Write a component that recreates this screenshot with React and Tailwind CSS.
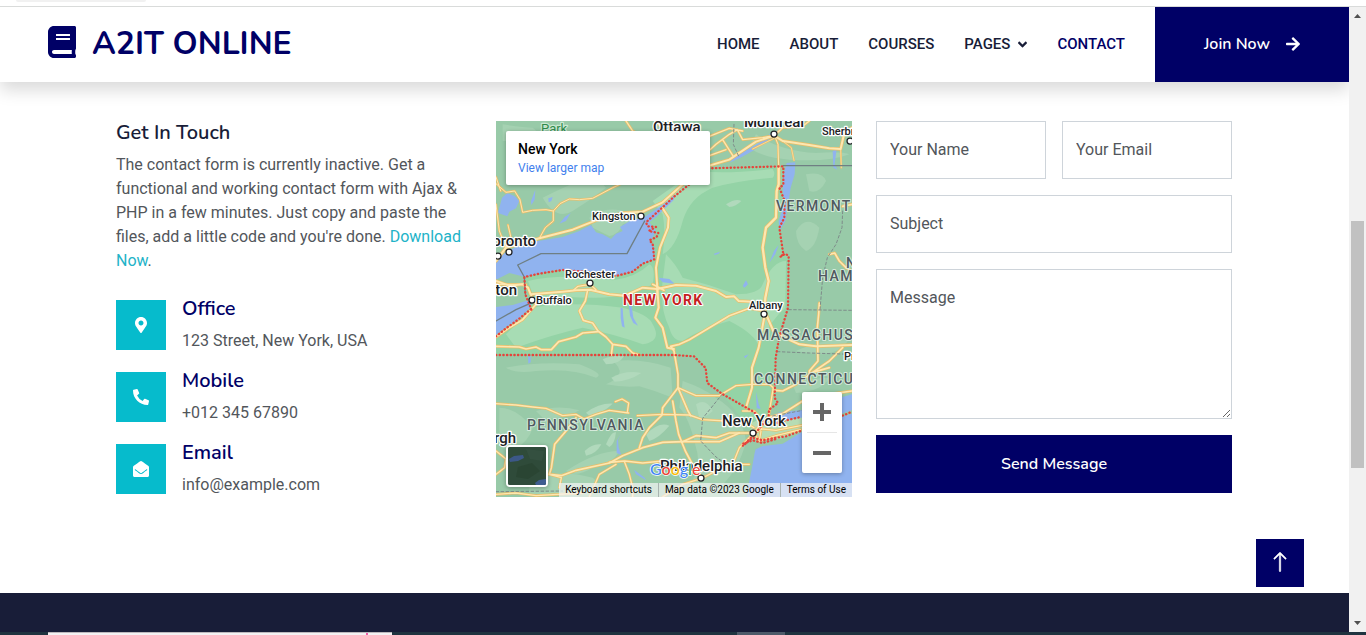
import React from "react";
import {
  FaBook,
  FaAngleDown,
  FaArrowRight,
  FaMapMarkerAlt,
  FaPhoneAlt,
  FaEnvelopeOpen,
} from "react-icons/fa";
import { BsArrowUp } from "react-icons/bs";

const NAV = [
  { label: "HOME" },
  { label: "ABOUT" },
  { label: "COURSES" },
  { label: "PAGES", menu: true },
  { label: "CONTACT", active: true },
];

const CONTACTS = [
  { title: "Office", text: "123 Street, New York, USA", Icon: FaMapMarkerAlt },
  { title: "Mobile", text: "+012 345 67890", Icon: FaPhoneAlt },
  { title: "Email", text: "info@example.com", Icon: FaEnvelopeOpen },
];

function Header() {
  return (
    <header className="relative z-10 flex h-[75px] shrink-0 items-stretch justify-between bg-white shadow-[0_8px_16px_rgba(0,0,0,0.15)]">
      <a href="#home" className="flex items-center gap-4 pl-12 pb-1.5 text-[#000066]">
        <FaBook className="h-8 w-7" />
        <span className="pt-1 font-['Nunito','Lato',sans-serif] text-[32px] leading-10 font-bold">
          A2IT ONLINE
        </span>
      </a>
      <div className="flex items-stretch">
        <nav className="flex items-center gap-[30px] pr-[30px] text-[15px] font-medium">
          {NAV.map(({ label, menu, active }) => (
            <a
              key={label}
              href={"#" + label.toLowerCase()}
              className={
                active
                  ? "flex items-center text-[#000066]"
                  : "flex items-center gap-2 text-[#181d38]"
              }
            >
              {label}
              {menu && <FaAngleDown className="h-[15px] w-[9px]" />}
            </a>
          ))}
        </nav>
        <a
          href="#join"
          className="flex w-[194px] items-center justify-center gap-4 bg-[#000066] pb-0.5 font-['Nunito','Lato',sans-serif] text-base font-semibold text-white"
        >
          Join Now
          <FaArrowRight className="h-4 w-[14px]" />
        </a>
      </div>
    </header>
  );
}

const WATER = [
  "M0 412L40 388 90 366 200 348 250 330 285 312 300 334 320 340 345 354 360 338 380 330 372 318 408 296 440 292 520 238 534 222 534 236 478 290 460 304 480 330 462 362 475 380 475 415 440 428 410 452 360 465 270 452 180 446 130 458 85 467 40 456 0 476Z",
  "M0 558L50 552 90 540 108 540 104 558 66 596 30 618 0 642Z",
  "M779 985L800 975 860 968 914 935 1000 898 1068 878V1128H752L756 1100 768 1040 776 995Z",
  "M822 888L850 874 914 868 970 848 1068 820V868L1000 890 940 906 880 904 822 916Z",
  "M872 126L898 124 896 160 884 200 878 240 868 300 850 330 848 300 862 256 860 170Z",
  "M700 125L720 105 790 65 822 38 850 26 826 50 770 90 730 112Z",
  "M18 230L34 216 56 226 70 240 60 262 40 272 34 286 6 276Z",
  "M105 240L118 206 116 236 106 252Z",
  "M157 232L170 228 166 240 158 244Z",
  "M190 308L206 288 224 276 210 300Z",
  "M1010 90L1022 84 1016 130 1024 146 1012 140Z",
  "M820 425L834 390 848 372 838 400Z",
  "M740 495L750 478 756 490 746 500Z",
  "M374 560L380 562 382 590 386 620 378 616 374 590Z",
  "M398 544L406 550 412 590 426 614 412 606 402 584Z",
  "M780 812L788 850 794 864 782 862Z",
  "M488 470L520 474 536 488 500 484Z",
  "M375 938L366 956 368 980 376 1002 362 996 362 960Z",
  "M96 706H104V724L97 728Z",
  "M414 1046L446 1070 450 1078 420 1060Z",
  "M654 398L672 392 668 398 656 402Z",
  "M744 706L758 700 748 712Z",
];

const LIGHT_LAND = [
  "M250 180Q300 160 330 200Q280 240 230 270T140 230Q200 200 250 180Z",
  "M20 10Q80 20 110 20Q140 40 90 50T20 60Z",
  "M280 290Q330 250 400 276Q440 290 380 310Q370 340 340 345Q310 330 290 320Z",
  "M780 40Q850 90 960 96Q1040 90 1060 100Q1000 124 880 116Q800 110 760 80Z",
  "M30 740Q130 720 250 730Q330 760 300 770Q230 740 120 750Q60 760 30 740Z",
  "M350 720Q440 710 524 740L530 830Q480 810 430 796Q380 800 330 790Q400 760 350 720Z",
  "M120 870Q190 850 250 868Q200 900 140 890Z",
  "M210 1050Q300 990 370 990Q350 1030 290 1040Q240 1070 210 1050Z",
  "M560 780Q620 800 660 830Q740 880 750 960Q730 1050 660 1110H570Q620 1040 600 980Q580 890 550 860Z",
  "M900 690Q960 660 1060 650Q1040 700 960 700Z",
  "M900 330Q930 280 970 320Q960 380 930 390Q900 370 900 330Z",
  "M930 160Q980 150 990 180Q970 220 940 210Z",
  "M10 860Q60 860 110 920Q100 960 50 990Q10 970 10 930Z",
  "M100 1080Q180 1040 290 1070Q330 1100 280 1120H100Z",
  "M890 790Q940 770 1000 770Q980 810 900 816Z",
];

const NY_LIGHT = [
  "M96 480Q200 456 350 478Q420 470 460 430Q480 440 470 490Q400 530 300 530T110 520Z",
  "M110 560Q220 540 380 560Q460 580 470 610Q500 660 440 670Q360 640 260 620Q170 640 60 680L30 640Z",
  "M510 400Q540 430 560 470Q640 490 720 520Q790 520 800 490Q830 420 870 420L868 560Q820 600 790 680Q780 640 700 600Q620 620 560 660Q530 660 520 620Q490 560 500 480Z",
  "M470 240Q540 190 600 150Q690 160 830 144Q840 160 830 170Q720 180 650 200Q580 230 560 300Q540 380 500 400Q510 330 500 280Z",
];

const PATCHES = [
  "M320 715Q350 700 384 706Q370 730 330 730Z",
  "M346 770Q390 745 436 756Q400 780 356 782Z",
  "M270 875Q310 846 350 848Q320 878 280 884Z",
  "M266 990Q290 966 316 970Q300 1000 270 1004Z",
  "M330 970Q346 930 360 934Q356 970 340 978Z",
  "M450 940Q490 900 520 914Q490 950 460 960Z",
  "M600 850Q630 830 650 870Q630 890 610 890Z",
  "M60 110Q130 90 190 110Q150 130 90 130Z",
  "M690 250Q720 230 736 240Q720 256 700 258Z",
];

const NY_STATE =
  "M100 540L85 468 130 458 200 447 270 452 360 465 410 452 440 428 475 415 470 368 487 342 465 322 450 304 490 268 534 227 640 142 862 136 862 192 850 200 866 240 865 290 850 320 862 400 878 405 876 560 849 651 839 711 836 831 846 846 819 866 774 941 679 819 634 786 629 741 594 706 534 702H0V645L60 605Z";

const RED_BORDER = [
  "M106 566L88 520 85 468 130 458 200 447 270 452 360 465 410 452 440 428 475 415 470 368 460 358 482 348 487 336 458 330 480 318 455 316 450 304 490 268 534 227 640 142 862 136 862 192 850 200 866 240 865 290 850 320 862 400 852 408 868 398 878 405 876 560 849 651 839 711 836 831 846 846 819 866 818 890 774 941 740 975 770 950 800 958 830 952 870 946 914 930",
  "M0 702H534L594 706 629 741 634 786 679 819 774 873 800 900",
  "M0 646L30 622 66 596 110 560",
  "M822 912L870 898 914 888",
  "M1040 884L1068 872",
  "M742 968L770 958 800 966 840 954",
];

const GREY_LINES = [
  "M88 520L85 468 65 432 135 398H393L446 300",
  "M862 134H1068",
  "M0 600L60 566 108 545",
];

const DASHED = [
  "M1040 270L1038 320 1020 370 994 410 980 470 972 566",
  "M878 566L1068 568",
  "M844 692L940 696 1068 700",
  "M679 819L620 892 614 960 660 1008 720 1050",
  "M714 10L712 70 730 110",
  "M0 1112L200 1110",
  "M830 885L920 868",
];

const ROADS = [
  { d: "M0 420L30 380 60 372 130 352 230 326 300 298 380 276 440 272 500 244 560 190 640 134 700 116 780 62 834 44", w: 6 },
  { d: "M30 380L10 330 0 250M0 188L30 214 56 210 72 236 80 274 110 268 150 266 172 270 192 248 220 234 250 236 290 232 350 200 372 190", w: 3 },
  { d: "M36 312L44 346 30 380M130 352L148 320 172 300 172 270M0 168L14 210", w: 3 },
  { d: "M0 480L40 494 80 490 96 500 104 520 200 512 240 508 282 506 340 520 386 524 440 500 484 504 540 492 600 494 660 510 690 528 714 526 728 540 768 542", w: 6 },
  { d: "M234 506L246 496 282 490 300 506M0 490L90 490", w: 4 },
  { d: "M484 504L480 440 492 380 516 320 518 290 500 262", w: 6 },
  { d: "M484 504L488 560 478 590 500 620 514 680 534 684", w: 6 },
  { d: "M104 520L120 550 80 596 40 620 0 648", w: 5 },
  { d: "M274 512L268 540 250 570 262 598 290 606 306 630 330 648 350 670 390 676 410 696 430 702M350 670L346 702", w: 5 },
  { d: "M0 676L70 678 90 684 120 678 136 686 166 686 188 662 240 648 260 636 306 632", w: 5 },
  { d: "M848 138L848 190 842 210 840 290 810 320 800 380 808 440 818 480 808 530 806 570", w: 7 },
  { d: "M834 44L860 60 940 72 1000 82 1034 84 1044 40 1068 20", w: 6 },
  { d: "M848 138L846 70 838 50", w: 3 },
  { d: "M642 86L660 70 700 40 724 26 740 56 800 50 834 44M640 46L700 22 740 30M680 56L712 106M640 104L690 86M834 44L860 20 920 16 940 0", w: 4 },
  { d: "M1034 84L1036 140M860 60L886 80 894 118M834 52L770 84", w: 2 },
  { d: "M1000 400L1016 396 1030 420 1050 440 1068 450M1040 256L1068 250M970 546L968 580 964 620 966 720 940 750 944 790", w: 5 },
  { d: "M806 570L832 630 870 652 910 670 960 676 1068 672M806 582L788 680 768 740 768 800 750 860", w: 6 },
  { d: "M806 570L760 562 700 584 640 620 580 656 550 670 524 676 534 690 546 760 546 800 576 870 584 884", w: 5 },
  { d: "M546 800L600 824 670 824 720 794 770 790 820 790 832 800 822 860 816 900", w: 4 },
  { d: "M836 808L860 810 900 790 950 754 1000 720 1040 680M950 754L1000 740M816 890L860 878 920 840 1000 820 1068 810", w: 5 },
  { d: "M546 800L500 860 498 882 460 920 440 950 430 980M530 840L540 900 548 940 568 990 600 1050 617 1072", w: 5 },
  { d: "M424 884L500 880 580 882 620 896 690 900 740 900 774 920", w: 4 },
  { d: "M0 848L60 852 110 858 150 862 200 884 240 880 264 894 300 880 340 868 398 876M358 842L378 834 398 846 394 874", w: 4 },
  { d: "M240 890L210 930 176 970 166 1040 160 1060 196 1064 240 1048 340 1026 380 1004 440 980 500 964 560 962 600 944 660 950 700 936 774 936", w: 5 },
  { d: "M340 1024L386 1020 440 1026 500 1020M560 962L600 962 670 962 730 936", w: 5 },
  { d: "M386 1024L400 1060 410 1100 410 1128M360 1030L310 1060 280 1128M160 1060L196 1070 190 1100M0 1120L60 1116 120 1124 260 1116", w: 4 },
  { d: "M774 936L730 980 710 1030 660 1050 617 1072 560 1090 500 1128M710 1030H760", w: 4 },
  { d: "M774 936L800 924 840 928 914 914 1000 900M774 936L790 960 840 944 914 926M774 936L800 900 774 870 740 870M790 960L800 900", w: 4 },
  { d: "M0 990L30 1014 26 1040 0 1060M390 0L410 30 450 50M480 0L500 24 530 30", w: 4 },
  { d: "M470 490L504 508M484 486V520", w: 5 },
];

const CITIES = [
  [278, 13],
  [354, 20],
  [145, 95],
  [13, 131],
  [2, 135],
  [94, 162],
  [36, 179],
  [268, 193],
  [257, 312],
  [205, 357],
];

function MapDrawing() {
  return (
    <svg
      viewBox="0 0 356 376"
      preserveAspectRatio="xMidYMid slice"
      className="absolute inset-0 h-full w-full font-['Roboto',sans-serif]"
      role="img"
      aria-label="Map of New York"
    >
      <rect width="356" height="376" fill="#98caa8" />
      <g transform="scale(0.33333)" strokeLinejoin="round" strokeLinecap="round">
        {LIGHT_LAND.map((d) => (
          <path key={d} d={d} fill="#a5d2b2" />
        ))}
        <path d={NY_STATE} fill="#94d3a6" />
        {NY_LIGHT.map((d) => (
          <path key={d} d={d} fill="#a7dcb4" />
        ))}
        {PATCHES.map((d) => (
          <path key={d} d={d} fill="#b1d9bc" />
        ))}
        {WATER.map((d) => (
          <path key={d} d={d} fill="#90b3ef" />
        ))}
        <path
          d="M768 905L790 895 830 905 914 890 1000 888 914 932 850 954 790 958 760 950Z"
          fill="#b6dcb4"
        />
        <g fill="none" stroke="#e9bd68">
          {ROADS.map(({ d, w }) => (
            <path key={d} d={d} strokeWidth={w + 4} />
          ))}
        </g>
        <g fill="none" stroke="#fde7b0">
          {ROADS.map(({ d, w }) => (
            <path key={d} d={d} strokeWidth={w} />
          ))}
        </g>
        <g fill="none" stroke="#6f7f83" strokeWidth="4">
          {GREY_LINES.map((d) => (
            <path key={d} d={d} />
          ))}
        </g>
        <g fill="none" stroke="#7d8c8a" strokeWidth="3" strokeDasharray="8 7">
          {DASHED.map((d) => (
            <path key={d} d={d} />
          ))}
        </g>
        <g fill="none" stroke="#e5443b" strokeWidth="7" strokeDasharray="1 10">
          {RED_BORDER.map((d) => (
            <path key={d} d={d} />
          ))}
        </g>
      </g>

      <g fill="#fff" stroke="#202124" strokeWidth="1.25">
        {CITIES.map(([x, y]) => (
          <circle key={x} cx={x} cy={y} r="3" />
        ))}
      </g>

      <g
        fill="#202124"
        stroke="#fff"
        strokeWidth="2.5"
        strokeLinejoin="round"
        paintOrder="stroke"
        fontWeight="500"
        fontSize="11"
      >
        <text x="45" y="12" fontSize="13" fontWeight="400" fill="#2f8a4c" stroke="#c9e8d1">Park</text>
        <text x="326" y="14">Sherbrooke</text>
        <text x="96" y="99">Kingston</text>
        <text x="69" y="157">Rochester</text>
        <text x="40" y="183">Buffalo</text>
        <text x="253" y="188">Albany</text>
        <text x="348" y="239">Providence</text>
        <g fontSize="15">
          <text x="157" y="11">Ottawa</text>
          <text x="248" y="6">Montreal</text>
          <text x="40" y="125" textAnchor="end">Toronto</text>
          <text x="21" y="174" textAnchor="end">Hamilton</text>
          <text x="226" y="305">New York</text>
          <text x="20" y="322" textAnchor="end">Pittsburgh</text>
          <text x="164" y="350">Philadelphia</text>
        </g>
      </g>
      <g
        className="tracking-widest"
        fill="#50595f"
        stroke="#d5eadb"
        strokeWidth="2"
        strokeLinejoin="round"
        paintOrder="stroke"
        fontWeight="500"
        fontSize="14"
      >
        <text x="280" y="90">VERMONT</text>
        <text x="350" y="147">NEW</text>
        <text x="322" y="160">HAMPSHIRE</text>
        <text x="261" y="219">MASSACHUSETTS</text>
        <text x="258" y="263">CONNECTICUT</text>
        <text x="31" y="309">PENNSYLVANIA</text>
        <text x="127" y="184" fontWeight="700" fill="#c5221f" stroke="#fff">NEW YORK</text>
      </g>
      <text
        x="154"
        y="354"
        fontSize="16"
        fontWeight="500"
        stroke="#fff"
        strokeWidth="1.5"
        paintOrder="stroke"
        className="font-['Lato',sans-serif]"
      >
        <tspan fill="#4285f4">G</tspan>
        <tspan fill="#ea4335">o</tspan>
        <tspan fill="#fbbc04">o</tspan>
        <tspan fill="#4285f4">g</tspan>
        <tspan fill="#34a853">l</tspan>
        <tspan fill="#ea4335">e</tspan>
      </text>
    </svg>
  );
}

function MapPanel() {
  return (
    <section aria-label="Map" className="relative overflow-hidden bg-[#98caa8]">
      <MapDrawing />
      <div className="absolute top-2.5 left-2.5 w-[204px] rounded-xs bg-white px-3 py-2 shadow-[0_1px_4px_rgba(0,0,0,0.3)]">
        <p className="text-sm leading-5 font-medium text-black">New York</p>
        <a href="#map" className="block text-xs leading-[18px] text-[#427fed]">
          View larger map
        </a>
      </div>
      <button
        type="button"
        aria-label="Show satellite imagery"
        className="absolute bottom-2.5 left-2.5 h-[42px] w-[42px] overflow-hidden rounded-sm border-2 border-white bg-[#2c4636] shadow-[0_1px_4px_rgba(0,0,0,0.3)]"
      >
        <svg viewBox="0 0 38 38" className="h-full w-full">
          <rect width="38" height="38" fill="#2f4b3a" />
          <path d="M10 20L24 16 32 24 20 32 8 30Z" fill="#2a4533" />
          <path d="M18 2L36 4 34 14 22 12Z" fill="#345040" />
          <path d="M1 12L6 9 15 8 16 11 10 14 2 15Z" fill="#3c5888" />
          <path d="M27 36L31 33 38 32V38H28Z" fill="#3f5d90" />
        </svg>
      </button>
      <div className="absolute right-2.5 bottom-6 flex w-10 flex-col items-center rounded-xs bg-white shadow-[0_1px_4px_rgba(0,0,0,0.3)]">
        <button type="button" aria-label="Zoom in" className="flex h-10 w-10 items-center justify-center">
          <svg viewBox="0 0 18 18" className="h-[18px] w-[18px]" fill="#666">
            <path d="M7 0h4v7h7v4h-7v7H7v-7H0V7h7z" />
          </svg>
        </button>
        <div className="h-px w-[30px] bg-[#e6e6e6]" />
        <button type="button" aria-label="Zoom out" className="flex h-10 w-10 items-center justify-center">
          <svg viewBox="0 0 18 18" className="h-[18px] w-[18px]" fill="#666">
            <path d="M0 7h18v4H0z" />
          </svg>
        </button>
      </div>
      <div className="absolute right-0 bottom-0 flex h-[14px] items-center divide-x divide-[#a9b3b0] bg-[#f5f5f5]/70 text-[10px] leading-[14px] text-black">
        <button type="button" className="px-1.5">Keyboard shortcuts</button>
        <span className="px-1.5">Map data ©2023 Google</span>
        <a href="#terms" className="px-1.5">Terms of Use</a>
      </div>
    </section>
  );
}

const FIELD =
  "block w-full min-w-0 border border-[#ced4da] bg-white px-[13px] text-base leading-6 text-[#52565b] placeholder:text-[#52565b] placeholder:opacity-100 outline-none";

function ContactForm() {
  return (
    <form className="grid grid-cols-2 content-start gap-4" onSubmit={(e) => e.preventDefault()}>
      <input type="text" aria-label="Your Name" placeholder="Your Name" className={FIELD + " h-[58px] pb-0.5"} />
      <input type="email" aria-label="Your Email" placeholder="Your Email" className={FIELD + " h-[58px] pb-0.5"} />
      <input type="text" aria-label="Subject" placeholder="Subject" className={FIELD + " col-span-2 h-[58px] pb-0.5"} />
      <textarea
        aria-label="Message"
        placeholder="Message"
        className={FIELD + " col-span-2 h-[150px] resize-y py-4"}
      />
      <button
        type="submit"
        className="col-span-2 h-[58px] bg-[#000066] font-['Nunito','Lato',sans-serif] text-base font-semibold text-white"
      >
        Send Message
      </button>
    </form>
  );
}

export default function App() {
  return (
    <div className="flex h-screen flex-col overflow-hidden bg-white font-['Roboto',sans-serif] text-[#52565b]">
      <div className="h-[7px] shrink-0 border-b border-[#d9dbda] pl-4">
        <div className="h-0.5 w-[130px] rounded-b-full bg-[#f1f1f1]" />
      </div>

      <div className="flex min-h-0 flex-1">
        <div className="relative flex min-w-0 flex-1 flex-col overflow-hidden">
          <Header />
          <main className="mx-auto grid w-full max-w-[1141px] shrink-0 grid-cols-3 gap-6 pt-[39px] pr-[13px] pb-24 pl-3">
            <section>
              <h5 className="mb-2 font-['Nunito','Lato',sans-serif] text-xl leading-6 font-semibold text-[#181d38]">
                Get In Touch
              </h5>
              <p className="mb-6 text-base leading-6">
                The contact form is currently inactive. Get a functional and working contact form
                with Ajax &amp; PHP in a few minutes. Just copy and paste the files, add a little
                code and you're done.{" "}
                <a href="#download" className="text-[#22b3c8]">
                  Download Now
                </a>
                .
              </p>
              <div className="flex flex-col gap-4">
                {CONTACTS.map(({ title, text, Icon }) => (
                  <div key={title} className="flex items-center gap-4">
                    <div className="flex h-[50px] w-[50px] shrink-0 items-center justify-center bg-[#06bbcc] text-white">
                      <Icon className="h-4 w-4" />
                    </div>
                    <div>
                      <h5 className="mb-2 font-['Nunito','Lato',sans-serif] text-xl leading-6 font-semibold text-[#000066]">
                        {title}
                      </h5>
                      <p className="text-base leading-6">{text}</p>
                    </div>
                  </div>
                ))}
              </div>
            </section>
            <MapPanel />
            <ContactForm />
          </main>
          <footer className="flex-1 bg-[#181d38]" />
          <a
            href="#top"
            aria-label="Back to top"
            className="absolute right-[45px] bottom-[45px] flex h-12 w-12 items-center justify-center bg-[#000066] pb-0.5 text-white"
          >
            <BsArrowUp className="h-[22px] w-[22px]" stroke="currentColor" strokeWidth="0.4" />
          </a>
        </div>

        <div className="flex w-[17px] shrink-0 flex-col items-center justify-between bg-[#f1f1f1] py-[7px]" aria-hidden="true">
          <svg viewBox="0 0 7 4" className="h-1 w-[7px]" fill="#505050">
            <path d="M3.5 0L7 4H0z" />
          </svg>
          <div className="flex w-[13px] flex-1 flex-col">
            <div className="flex-[203]" />
            <div className="flex-[247] bg-[#c1c1c1]" />
            <div className="flex-[153]" />
          </div>
          <svg viewBox="0 0 7 4" className="h-1 w-[7px]" fill="#505050">
            <path d="M3.5 4L0 0H7z" />
          </svg>
        </div>
      </div>

      <div className="flex h-[3px] shrink-0 bg-[#1f3440] pl-12">
        <div className="flex w-[344px] justify-end border-t border-[#bdb9bd] bg-[#f3f1f2] pr-6">
          <div className="w-0.5 bg-[#ee5ba8]" />
        </div>
        <div className="ml-[345px] w-12 bg-[#4d5a69]" />
      </div>
    </div>
  );
}
